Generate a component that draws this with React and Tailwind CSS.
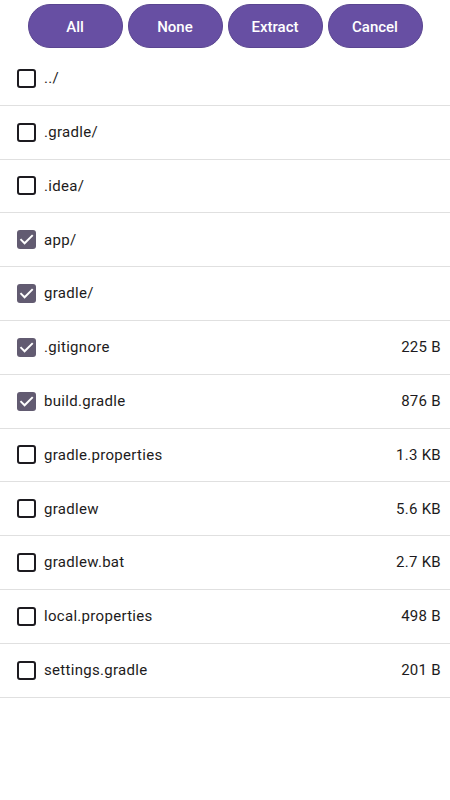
import React from "react";

const items = [
  { name: "../", checked: false },
  { name: ".gradle/", checked: false },
  { name: ".idea/", checked: false },
  { name: "app/", checked: true },
  { name: "gradle/", checked: true },
  { name: ".gitignore", checked: true, size: "225 B" },
  { name: "build.gradle", checked: true, size: "876 B" },
  { name: "gradle.properties", checked: false, size: "1.3 KB" },
  { name: "gradlew", checked: false, size: "5.6 KB" },
  { name: "gradlew.bat", checked: false, size: "2.7 KB" },
  { name: "local.properties", checked: false, size: "498 B" },
  { name: "settings.gradle", checked: false, size: "201 B" },
];

function Checkbox({ checked }) {
  if (checked) {
    return (
      <div className="w-[19px] h-[19px] rounded-[3px] bg-[#625b71] flex items-center justify-center shrink-0">
        <svg width="17" height="17" viewBox="0 0 24 24" fill="none">
          <path d="M4.5 12.5l4.8 4.8L19.8 6.8" stroke="white" strokeWidth="2.8" strokeLinecap="square" />
        </svg>
      </div>
    );
  }
  return <div className="w-[19px] h-[19px] rounded-[3px] border-2 border-[#1d1b20] shrink-0" />;
}

export default function App() {
  return (
    <div className="w-[450px] h-[800px] bg-white" style={{ fontFamily: "Roboto, sans-serif" }}>
      <div className="h-[52px] flex items-start justify-center gap-[5px] pt-[4px]">
        {["All", "None", "Extract", "Cancel"].map((b) => (
          <button
            key={b}
            className="w-[95px] h-[44px] rounded-full bg-[#674fa3] border border-[#5a4590] text-white text-[15px] font-medium pt-[2px]"
          >
            {b}
          </button>
        ))}
      </div>
      <div>
        {items.map((it) => (
          <div
            key={it.name}
            className="h-[53.8px] flex items-center border-b border-[#e0e0e0] pl-[16.5px] pr-[9px]"
          >
            <Checkbox checked={it.checked} />
            <span className="ml-[8.5px] text-[15px] tracking-[0.3px] text-[#1d1b20] flex-1">{it.name}</span>
            {it.size && <span className="text-[15px] tracking-[0.3px] text-[#1d1b20]">{it.size}</span>}
          </div>
        ))}
      </div>
    </div>
  );
}
